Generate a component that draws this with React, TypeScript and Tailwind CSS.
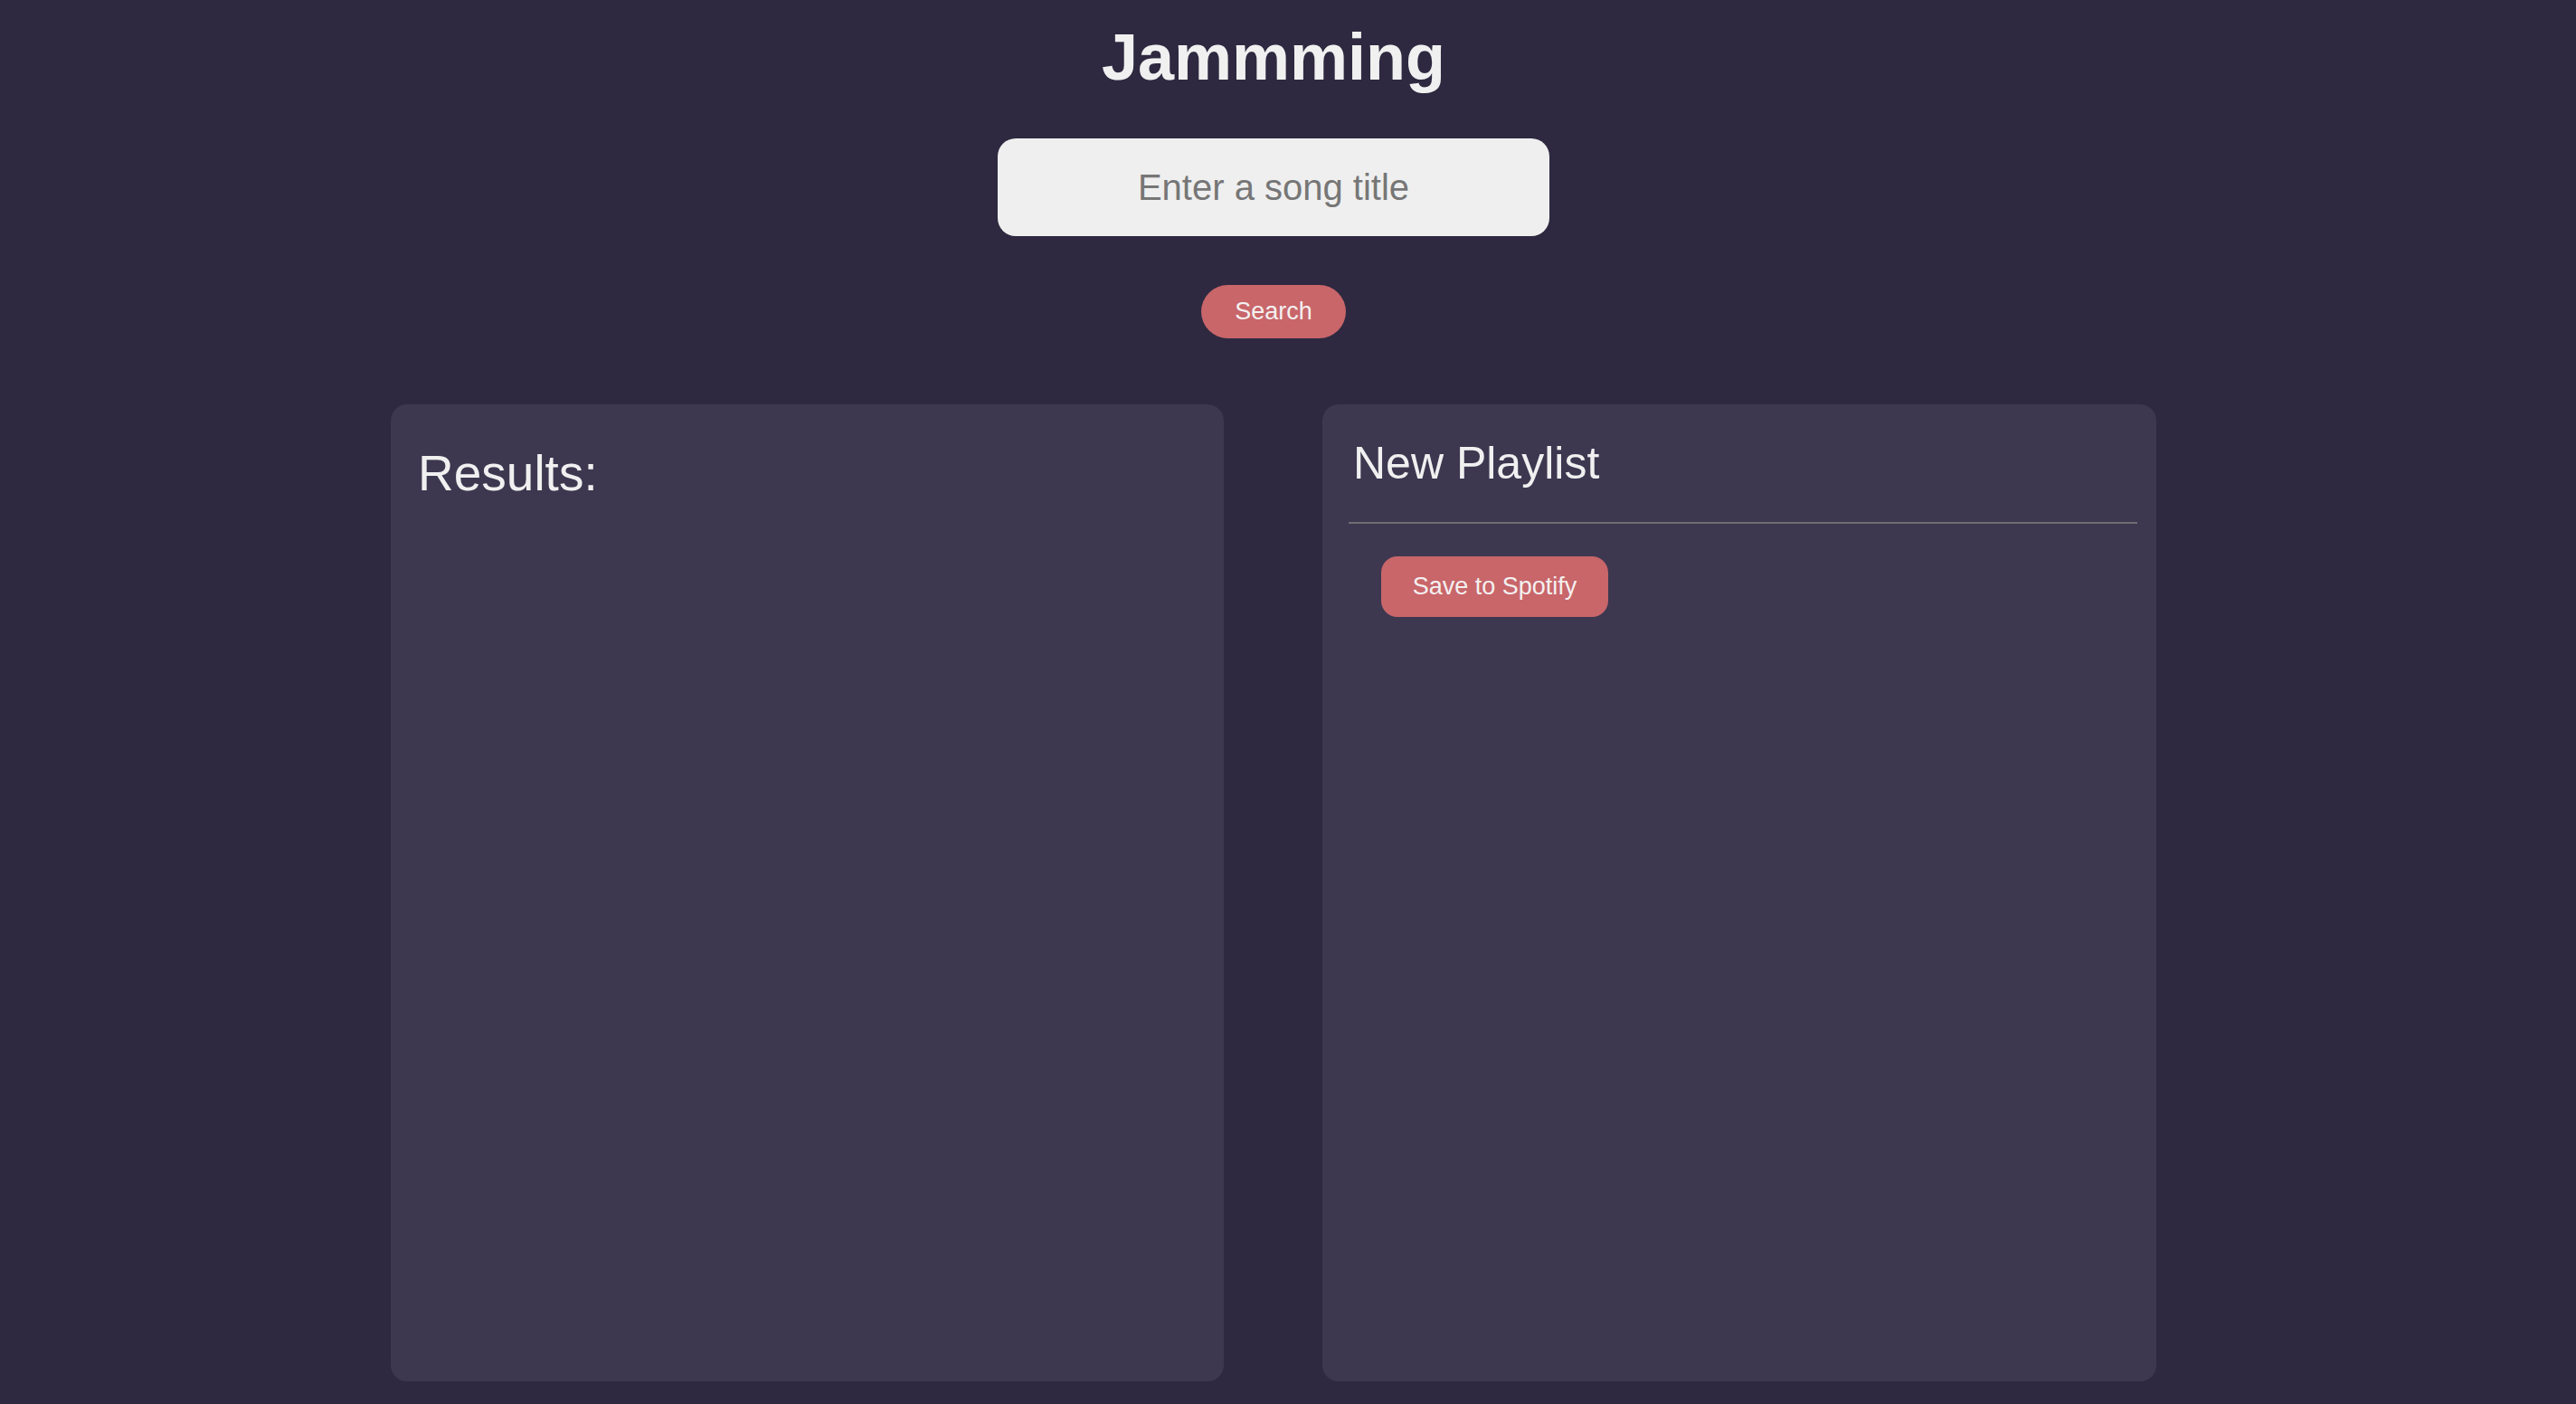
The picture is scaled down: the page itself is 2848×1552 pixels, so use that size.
import React from 'react';

const App: React.FC = () => {
  return (
    <div className="min-h-screen bg-[#2e2940] pr-8 font-['Liberation_Sans',Arial,sans-serif] text-[#f0f0f0]">
      <div className="flex flex-col items-center">
        <h1 className="pt-[27px] text-[72px] leading-[72px] font-bold">Jammming</h1>

        <input
          type="text"
          placeholder="Enter a song title"
          className="mt-[54px] h-[108px] w-[610px] rounded-[20px] bg-[#efefef] text-center text-[40px] text-[#333] placeholder:text-[#767676] outline-none"
        />

        <button className="mt-[54px] h-[59px] w-[160px] rounded-full bg-[#c8666a] text-[27px] text-[#f4f0f0]">
          Search
        </button>

        <div className="mt-[73px] flex gap-[109px]">
          <section className="h-[1080px] w-[921px] rounded-[18px] bg-[#3d3850] pl-[30px] pt-[49px]">
            <h2 className="text-[55px] leading-[55px] font-normal">Results:</h2>
          </section>

          <section className="flex h-[1080px] w-[922px] flex-col items-start rounded-[18px] bg-[#3d3850] pl-[29px] pr-[21px] pt-[40px]">
            <input
              type="text"
              defaultValue="New Playlist"
              className="h-[92px] w-full border-b-2 border-[#706d72] bg-transparent pb-[40px] pl-[5px] text-[50px] leading-[50px] text-[#f0f0f0] outline-none"
            />
            <button className="ml-[36px] mt-[36px] h-[67px] w-[251px] rounded-[18px] bg-[#c8666a] text-[27px] text-[#f4f0f0]">
              Save to Spotify
            </button>
          </section>
        </div>
      </div>
    </div>
  );
};

export default App;
